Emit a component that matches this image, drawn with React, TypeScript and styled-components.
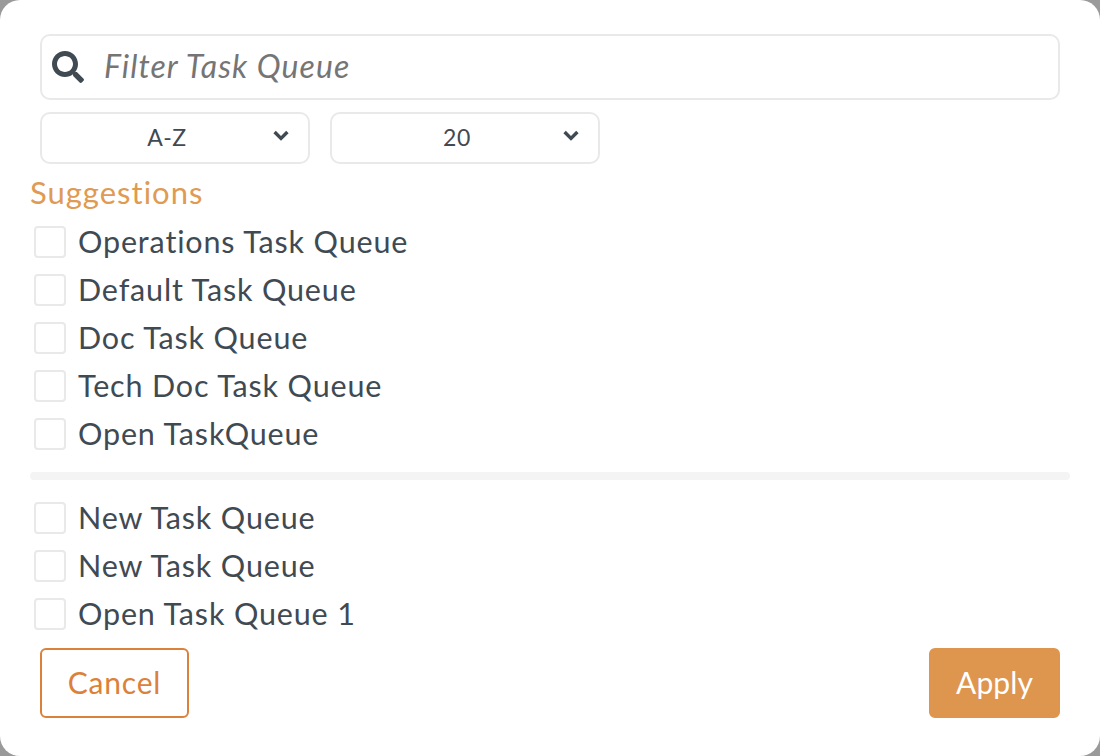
import React from "react";
import styled, { createGlobalStyle } from "styled-components";
import { FaSearch } from "react-icons/fa";

const suggestions = [
  "Operations Task Queue",
  "Default Task Queue",
  "Doc Task Queue",
  "Tech Doc Task Queue",
  "Open TaskQueue",
];

const others = ["New Task Queue", "New Task Queue", "Open Task Queue 1"];

const GlobalStyle = createGlobalStyle`
  html, body {
    margin: 0;
    padding: 0;
    background: #9a9a9a;
  }
  * {
    box-sizing: border-box;
  }
`;

const Modal = styled.div`
  width: 1100px;
  height: 756px;
  padding: 34px 30px 38px;
  background: #fff;
  border-radius: 20px;
  font-family: Lato, "Open Sans", sans-serif;
  color: #3f4a52;
  display: flex;
  flex-direction: column;
`;

const SearchBox = styled.div`
  height: 66px;
  margin: 0 10px;
  padding: 0 10px;
  border: 2px solid #e9e9e9;
  border-radius: 10px;
  display: flex;
  align-items: center;
  gap: 20px;
  svg {
    color: #3f4a52;
    flex-shrink: 0;
  }
`;

const SearchInput = styled.input`
  flex: 1;
  border: 0;
  outline: 0;
  padding: 0 0 3px;
  background: transparent;
  font-family: inherit;
  font-size: 32px;
  font-style: italic;
  letter-spacing: 1.05px;
  color: #3f4a52;
  &::placeholder {
    color: #757575;
    opacity: 1;
  }
`;

const Selects = styled.div`
  margin: 12px 10px 0;
  display: flex;
  gap: 20px;
`;

const Select = styled.div`
  width: 270px;
  height: 52px;
  padding: 0 14px 3px 0;
  border: 2px solid #e9e9e9;
  border-radius: 10px;
  position: relative;
  display: flex;
  align-items: center;
  justify-content: center;
  font-size: 23px;
  letter-spacing: 0.6px;
  span {
    padding-right: 2px;
  }
`;

const Chevron = styled.svg`
  position: absolute;
  right: 18px;
  top: 15px;
  width: 18px;
  height: 13px;
`;

const SectionTitle = styled.div`
  margin-top: 10px;
  height: 38px;
  line-height: 36px;
  font-size: 31px;
  letter-spacing: 1px;
  color: #e09a52;
`;

const Row = styled.label`
  height: 48px;
  padding-left: 4px;
  display: flex;
  align-items: center;
  gap: 12px;
  font-size: 30.5px;
  letter-spacing: 0.85px;
  span + span {
    padding-bottom: 3px;
  }
`;

const Check = styled.span`
  width: 32px;
  height: 32px;
  border: 2px solid #e9e9e9;
  border-radius: 4px;
  background: #fff;
`;

const List = styled.div`
  margin-top: 6px;
`;

const Divider = styled.div`
  height: 8px;
  margin: 14px 0 14px;
  background: #f4f4f4;
  border-radius: 4px;
`;

const Footer = styled.div`
  margin: auto 10px 0;
  display: flex;
  justify-content: space-between;
`;

const Button = styled.button<{ $primary?: boolean }>`
  height: 70px;
  width: ${(p) => (p.$primary ? "131px" : "149px")};
  padding: 0 0 3px;
  border: 2px solid ${(p) => (p.$primary ? "#de954e" : "#dc8139")};
  border-radius: 6px;
  background: ${(p) => (p.$primary ? "#de954e" : "#fff")};
  color: ${(p) => (p.$primary ? "#fff" : "#dc8139")};
  font-family: inherit;
  font-size: 30px;
  letter-spacing: ${(p) => (p.$primary ? "0.1px" : "0.8px")};
`;

const ChevronIcon = () => (
  <Chevron viewBox="0 0 18 13">
    <path d="M2.6 3 L9 9.4 L15.4 3" fill="none" stroke="#3f4a52" strokeWidth="3.4" />
  </Chevron>
);

const TaskRow = ({ name }: { name: string }) => (
  <Row>
    <Check />
    <span>{name}</span>
  </Row>
);

const App = () => {
  return (
    <>
      <GlobalStyle />
      <Modal>
        <SearchBox>
          <FaSearch size={32} />
          <SearchInput placeholder="Filter Task Queue" />
        </SearchBox>
        <Selects>
          <Select>
            <span>A-Z</span>
            <ChevronIcon />
          </Select>
          <Select>
            <span>20</span>
            <ChevronIcon />
          </Select>
        </Selects>
        <SectionTitle>Suggestions</SectionTitle>
        <List>
          {suggestions.map((name) => (
            <TaskRow key={name} name={name} />
          ))}
        </List>
        <Divider />
        {others.map((name, i) => (
          <TaskRow key={i} name={name} />
        ))}
        <Footer>
          <Button>Cancel</Button>
          <Button $primary>Apply</Button>
        </Footer>
      </Modal>
    </>
  );
};

export default App;
